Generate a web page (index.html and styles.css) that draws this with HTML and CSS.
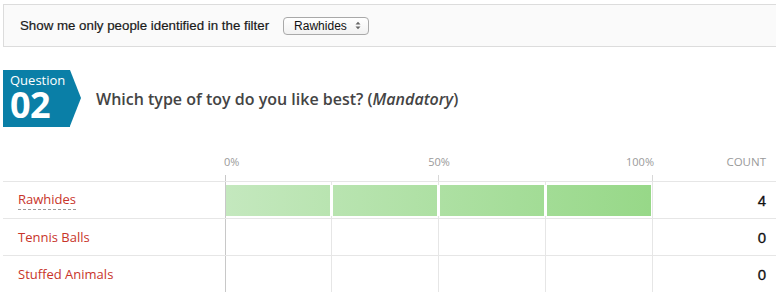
FILE: index.html
```html
<!DOCTYPE html>
<html lang="en">
<head>
    <meta charset="UTF-8">
    <meta name="viewport" content="width=device-width, initial-scale=1.0">
    <title>Survey results</title>
    <link rel="stylesheet" href="styles.css">
</head>
<body>
    <div class="filter-bar">
        <span class="filter-label">Show me only people identified in the filter</span>
        <div class="fake-select">
            <span>Rawhides</span>
            <svg width="6" height="9" viewBox="0 0 6 9">
                <path d="M0.5 3.5 L3 0.8 L5.5 3.5 Z M0.5 5.5 L3 8.2 L5.5 5.5 Z" fill="#666"/>
            </svg>
        </div>
    </div>

    <div class="question">
        <div class="badge">
            <div class="badge-word">Question</div>
            <div class="badge-num">02</div>
        </div>
        <h2 class="question-title">Which type of toy do you like best? (<em>Mandatory</em>)</h2>
    </div>

    <div class="results">
        <div class="head-row">
            <div class="cell-label"></div>
            <div class="cell-axis">
                <div class="axis-labels">
                    <span class="al-start">0%</span>
                    <span class="al-mid">50%</span>
                    <span class="al-end">100%</span>
                </div>
                <div class="ticks"><div></div><div></div></div>
            </div>
            <div class="head-count">COUNT</div>
        </div>

        <div class="row">
            <div class="cell-label"><a class="answer selected">Rawhides</a></div>
            <div class="cell-chart">
                <div class="grid"><div></div><div></div><div></div><div></div></div>
                <div class="bar" style="width: 425px;"></div>
            </div>
            <div class="cell-count">4</div>
        </div>

        <div class="row">
            <div class="cell-label"><a class="answer">Tennis Balls</a></div>
            <div class="cell-chart">
                <div class="grid"><div></div><div></div><div></div><div></div></div>
            </div>
            <div class="cell-count">0</div>
        </div>

        <div class="row">
            <div class="cell-label"><a class="answer">Stuffed Animals</a></div>
            <div class="cell-chart">
                <div class="grid"><div></div><div></div><div></div><div></div></div>
            </div>
            <div class="cell-count">0</div>
        </div>
    </div>
</body>
</html>
```

FILE: styles.css
```css
body {
    margin: 0;
    padding: 0;
    font-family: "Open Sans", sans-serif;
    background: #fff;
    overflow: hidden;
}
.filter-bar {
    display: flex;
    align-items: center;
    height: 41px;
    margin: 4px 0 0 3px;
    padding-left: 16px;
    background-color: #fafafa;
    border: 1px solid #dcdcdc;
    border-right: none;
}
.filter-label {
    font-family: "Liberation Sans", Arial, sans-serif;
    font-size: 13.3px;
    color: #1a1a1a;
    -webkit-text-stroke: 0.2px #1a1a1a;
}
.fake-select {
    display: flex;
    align-items: center;
    justify-content: space-between;
    box-sizing: border-box;
    width: 86px;
    height: 18px;
    margin-left: 14px;
    padding: 0 7px 0 10px;
    border: 1px solid #a9a9a9;
    border-radius: 4px;
    background: linear-gradient(#ffffff, #f1f1f1);
    font-family: "Liberation Sans", Arial, sans-serif;
    font-size: 12px;
    color: #111;
}
.question {
    display: flex;
    align-items: center;
    margin-top: 23px;
}
.badge {
    position: relative;
    box-sizing: border-box;
    width: 67px;
    height: 57px;
    margin-left: 3px;
    padding: 3px 0 0 7px;
    background-color: #0a7fa7;
    color: #fff;
}
.badge::after {
    content: "";
    position: absolute;
    top: 0;
    right: -11px;
    border-top: 28.5px solid transparent;
    border-bottom: 28.5px solid transparent;
    border-left: 11px solid #0a7fa7;
}
.badge-word {
    font-size: 13px;
    line-height: 15px;
}
.badge-num {
    font-size: 36px;
    font-weight: 700;
    line-height: 34px;
    letter-spacing: -0.5px;
}
.question-title {
    margin: 0 0 0 26px;
    font-size: 16px;
    font-weight: 600;
    color: #444;
}
.question-title em {
    font-style: italic;
}
.results {
    margin: 23px 0 0 3px;
}
.head-row, .row {
    display: grid;
    grid-template-columns: 222px 428px 1fr;
}
.head-row {
    height: 31px;
}
.row {
    height: 37px;
    box-sizing: border-box;
    border-top: 1px solid #e6e6e6;
}
.cell-axis {
    display: flex;
    flex-direction: column;
    justify-content: space-between;
}
.axis-labels {
    display: grid;
    grid-template-columns: 1fr auto 1fr;
    padding-top: 5px;
    font-size: 11px;
    line-height: 14px;
    color: #9a9a9a;
}
.al-start { justify-self: start; margin-left: -1px; }
.al-mid { justify-self: center; }
.al-end { justify-self: end; margin-right: -1px; }
.ticks {
    display: grid;
    grid-template-columns: 213px 214px;
    height: 6px;
    border-left: 1px solid #c8c8c8;
}
.ticks div {
    box-sizing: border-box;
    border-right: 1px solid #d8d8d8;
}
.head-count {
    padding: 5px 10px 0 0;
    font-size: 11.5px;
    line-height: 14px;
    color: #9a9a9a;
    text-align: right;
}
.cell-label {
    display: flex;
    align-items: center;
    padding-left: 15px;
}
.answer {
    font-size: 13px;
    color: #c8342a;
    text-decoration: none;
}
.answer.selected {
    padding-bottom: 1px;
    border-bottom: 1px dashed #9a9a9a;
}
.cell-chart {
    position: relative;
    border-left: 1px solid #c8c8c8;
}
.grid {
    display: grid;
    grid-template-columns: 106px 107px 107px 107px;
    height: 100%;
}
.grid div {
    box-sizing: border-box;
    border-right: 1px solid #e6e6e6;
}
.bar {
    position: absolute;
    top: 3px;
    left: 0;
    height: 31px;
    background:
        linear-gradient(to right,
            transparent 104px, #fff 104px, #fff 107px,
            transparent 107px, transparent 211px, #fff 211px, #fff 214px,
            transparent 214px, transparent 318px, #fff 318px, #fff 321px,
            transparent 321px),
        linear-gradient(to right, #c4e8be, #97d888);
}
.cell-count {
    display: flex;
    align-items: center;
    justify-content: flex-end;
    padding-right: 10px;
    font-family: "Liberation Sans", Arial, sans-serif;
    font-size: 15px;
    color: #111;
    -webkit-text-stroke: 0.3px #111;
}
```
